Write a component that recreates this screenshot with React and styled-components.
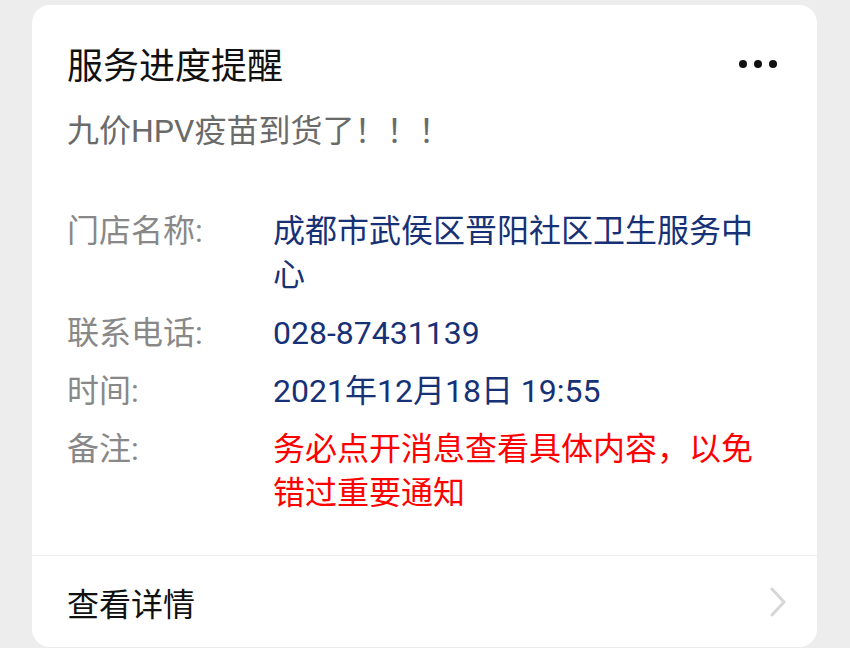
import React from "react";
import styled, { createGlobalStyle } from "styled-components";

const Global = createGlobalStyle`
  html, body { margin: 0; padding: 0; background: #ededed; }
  body { font-family: Roboto, "Noto Sans CJK SC", "Noto Sans", sans-serif; }
`;

const Page = styled.div`
  padding: 5px 33px 1px 32px;
`;

const Card = styled.div`
  background: #fff;
  border-radius: 18px;
  overflow: hidden;
`;

const Body = styled.div`
  padding: 38px 40px 40px 35px;
`;

const Header = styled.div`
  display: flex;
  align-items: center;
  justify-content: space-between;
`;

const Title = styled.div`
  font-size: 36px;
  line-height: 48px;
  color: #111;
`;

const Dots = styled.div`
  display: flex;
  gap: 7px;
  margin-top: -7px;
`;

const Dot = styled.span`
  width: 8px;
  height: 8px;
  border-radius: 50%;
  background: #111;
`;

const Subtitle = styled.div`
  margin-top: 18px;
  font-size: 32px;
  line-height: 44px;
  color: #6a6a6a;
`;

const Rows = styled.div`
  margin-top: 56px;
  display: flex;
  flex-direction: column;
  gap: 14px;
`;

const Row = styled.div`
  display: grid;
  grid-template-columns: 206px 1fr;
  font-size: 32px;
  line-height: 44px;
`;

const Label = styled.div`
  color: #888;
`;

const Value = styled.div`
  color: ${(p) => (p.$tone === "red" ? "#ff0000" : "#173177")};
`;

const Footer = styled.div`
  border-top: 1px solid #ececec;
  height: 91px;
  display: flex;
  align-items: center;
  justify-content: space-between;
  padding: 0 31px 0 35px;
`;

const FooterText = styled.div`
  font-size: 32px;
  line-height: 44px;
  color: #111;
  padding-top: 6px;
`;

const Chevron = () => (
  <svg width="16" height="30" viewBox="0 0 16 30">
    <polyline points="2,2 14,15 2,28" fill="none" stroke="#d6d6d6" strokeWidth="3" strokeLinecap="round" strokeLinejoin="round" />
  </svg>
);

const rows = [
  { label: "门店名称:", value: "成都市武侯区晋阳社区卫生服务中心" },
  { label: "联系电话:", value: "028-87431139" },
  { label: "时间:", value: "2021年12月18日 19:55" },
  { label: "备注:", value: "务必点开消息查看具体内容，以免错过重要通知", tone: "red" },
];

export default function App() {
  return (
    <>
      <Global />
      <Page>
        <Card>
          <Body>
            <Header>
              <Title>服务进度提醒</Title>
              <Dots>
                <Dot />
                <Dot />
                <Dot />
              </Dots>
            </Header>
            <Subtitle>九价HPV疫苗到货了！！！</Subtitle>
            <Rows>
              {rows.map((r) => (
                <Row key={r.label}>
                  <Label>{r.label}</Label>
                  <Value $tone={r.tone}>{r.value}</Value>
                </Row>
              ))}
            </Rows>
          </Body>
          <Footer>
            <FooterText>查看详情</FooterText>
            <Chevron />
          </Footer>
        </Card>
      </Page>
    </>
  );
}
